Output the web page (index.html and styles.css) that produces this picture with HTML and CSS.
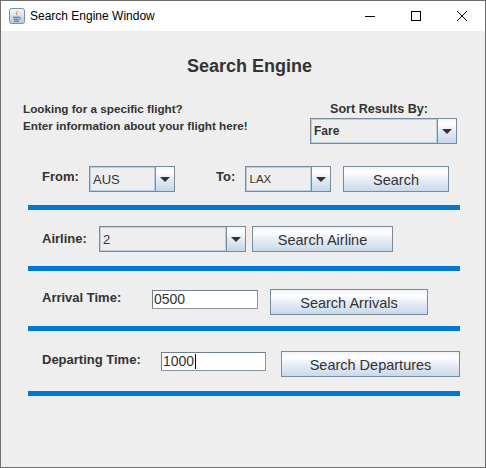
FILE: index.html
```html
<!DOCTYPE html>
<html>
<head>
<meta charset="utf-8">
<link rel="stylesheet" href="styles.css">
</head>
<body>
<div class="window">
  <div class="titlebar">
    <svg class="app-icon" width="16" height="16" viewBox="0 0 16 16">
      <defs>
        <linearGradient id="ig" x1="0" y1="0" x2="0" y2="1">
          <stop offset="0" stop-color="#f4f7fa"/>
          <stop offset="1" stop-color="#b9c9da"/>
        </linearGradient>
      </defs>
      <rect x="0.5" y="0.5" width="15" height="15" rx="2" fill="url(#ig)" stroke="#7d8fa3"/>
      <path d="M8.5 2.5c1.5 1.3-1.8 2.3-.3 4 .4.5.1 1.2-.4 1.5.8-.9-1.6-1.8-.6-3.3.6-.9 1.6-1.3 1.3-2.2z" fill="#e8741c"/>
      <path d="M4 9.2h6.5M4.5 11.2h5.5M5 13.2h5" stroke="#3f6d9c" stroke-width="1" fill="none"/>
      <path d="M10.5 9.5c1.6-.3 1.6 1.6 0 1.6" stroke="#3f6d9c" stroke-width="0.9" fill="none"/>
    </svg>
    <span class="title-text">Search Engine Window</span>
    <div class="controls">
      <div class="ctl">
        <svg width="10" height="10" viewBox="0 0 10 10"><path d="M0 5.5h10" stroke="#000" stroke-width="1"/></svg>
      </div>
      <div class="ctl">
        <svg width="10" height="10" viewBox="0 0 10 10"><rect x="0.5" y="0.5" width="9" height="9" fill="none" stroke="#000" stroke-width="1"/></svg>
      </div>
      <div class="ctl">
        <svg width="10" height="10" viewBox="0 0 10 10"><path d="M0 0L10 10M10 0L0 10" stroke="#000" stroke-width="1"/></svg>
      </div>
    </div>
  </div>

  <div class="content">
    <h1 class="heading">Search Engine</h1>

    <div class="info">
      <div class="intro">
        <div>Looking for a specific flight?</div>
        <div>Enter information about your flight here!</div>
      </div>
      <div class="sort">
        <div class="sort-label">Sort Results By:</div>
        <div class="combo combo-sort">
          <span class="combo-text text-bold">Fare</span>
          <span class="combo-btn"><i class="arrow"></i></span>
        </div>
      </div>
    </div>

    <div class="panel">
      <div class="row">
        <span class="label label-from">From:</span>
        <div class="combo combo-from">
          <span class="combo-text">AUS</span>
          <span class="combo-btn"><i class="arrow"></i></span>
        </div>
        <span class="label label-to">To:</span>
        <div class="combo combo-to">
          <span class="combo-text text-small">LAX</span>
          <span class="combo-btn"><i class="arrow"></i></span>
        </div>
        <button class="btn btn-search">Search</button>
      </div>
      <div class="rule rule-1"></div>

      <div class="row row-airline">
        <span class="label label-airline">Airline:</span>
        <div class="combo combo-airline">
          <span class="combo-text">2</span>
          <span class="combo-btn"><i class="arrow"></i></span>
        </div>
        <button class="btn btn-airline">Search Airline</button>
      </div>
      <div class="rule rule-2"></div>

      <div class="row row-arrival">
        <span class="label label-arrival">Arrival Time:</span>
        <div class="field field-arrival">0500</div>
        <button class="btn btn-arrival">Search Arrivals</button>
      </div>
      <div class="rule rule-3"></div>

      <div class="row row-depart">
        <span class="label label-depart">Departing Time:</span>
        <div class="field field-depart">1000<span class="caret"></span></div>
        <button class="btn btn-depart">Search Departures</button>
      </div>
      <div class="rule rule-4"></div>
    </div>
  </div>
</div>
</body>
</html>
```

FILE: styles.css
```css
* { box-sizing: border-box; }

html, body {
  margin: 0;
  padding: 0;
  background: #eeeeee;
}

body {
  font-family: "Liberation Sans", Arial, sans-serif;
}

.window {
  width: 486px;
  height: 468px;
  border: 1px solid #6f6f6f;
  background: #eeeeee;
  display: flex;
  flex-direction: column;
}

/* ---------- title bar ---------- */
.titlebar {
  height: 30px;
  background: #ffffff;
  display: flex;
  align-items: center;
  flex: none;
}

.app-icon {
  margin-left: 8px;
  flex: none;
}

.title-text {
  margin-left: 5px;
  font-size: 12px;
  color: #000;
  font-family: "Liberation Sans", Arial, sans-serif;
}

.controls {
  margin-left: auto;
  display: flex;
  align-self: stretch;
}

.ctl {
  width: 46px;
  display: flex;
  align-items: center;
  justify-content: center;
}

/* ---------- content ---------- */
.content {
  flex: 1;
  background: #eeeeee;
  color: #333333;
}

.heading {
  margin: 0;
  padding-top: 24px;
  padding-left: 13px;
  font-size: 18px;
  line-height: 22px;
  font-weight: bold;
  text-align: center;
  color: #333333;
}

.info {
  display: flex;
  align-items: flex-start;
  margin-top: 23px;
}

.intro {
  margin-left: 22px;
  font-size: 11.7px;
  font-weight: bold;
  line-height: 17px;
  color: #333333;
}

.sort {
  margin-left: auto;
  margin-right: 28px;
  margin-top: 1px;
  width: 147px;
}

.sort-label {
  padding-left: 20px;
  font-size: 12.6px;
  font-weight: bold;
  line-height: 17px;
  color: #333333;
  white-space: nowrap;
}

/* ---------- combo ---------- */
.combo {
  height: 26px;
  border: 1px solid #7a8a99;
  display: flex;
  background: #eeeeee;
  flex: none;
}

.combo-text {
  flex: 1;
  display: flex;
  align-items: center;
  padding-left: 2px;
  font-size: 13px;
  color: #333333;
  border: 1px solid #b8cfe5;
  background: #eeeeee;
}

.text-bold {
  font-weight: bold;
  font-size: 12px;
}

.text-small {
  font-size: 11.5px;
  padding-left: 2.5px;
}

.combo-btn {
  width: 19px;
  flex: none;
  border-left: 1px solid #7a8a99;
  background: linear-gradient(to bottom, #f2f6fa 0%, #ffffff 20%, #dde8f3 60%, #c5d6e8 100%);
  display: flex;
  align-items: center;
  justify-content: center;
}

.arrow {
  display: block;
  width: 0;
  height: 0;
  border-left: 5px solid transparent;
  border-right: 5px solid transparent;
  border-top: 5px solid #333333;
  margin-top: 1px;
}

.combo-sort { width: 147px; }
.combo-from { width: 86px; }
.combo-to { width: 86px; }
.combo-airline { width: 147px; }

/* ---------- panel ---------- */
.panel {
  margin-left: 27px;
  width: 432px;
  margin-top: 22px;
}

.row {
  display: flex;
  align-items: flex-start;
  height: 26px;
}

.label {
  font-size: 13px;
  font-weight: bold;
  line-height: 16px;
  color: #333333;
  flex: none;
  white-space: nowrap;
}

.label-from { margin-left: 14px; width: 47px; margin-top: 3px; }
.label-to { margin-left: 41px; width: 29px; margin-top: 3px; }
.label-airline { margin-left: 14px; width: 57px; margin-top: 5px; }
.label-arrival { margin-left: 14px; width: 110px; margin-top: 1px; }
.label-depart { margin-left: 14px; width: 119px; margin-top: 1px; }

.btn {
  height: 26px;
  border: 1px solid #7a8a99;
  background: linear-gradient(to bottom, #eef3f8 0%, #ffffff 22%, #e4ecf5 55%, #c9d9ea 100%);
  font-family: "Liberation Sans", Arial, sans-serif;
  font-size: 14.5px;
  color: #333333;
  padding: 0;
  padding-top: 1px;
  margin: 0;
  flex: none;
  text-align: center;
}

.btn-search { margin-left: 12px; width: 106px; }
.btn-airline { margin-left: 6px; width: 141px; }
.btn-arrival { margin-left: 12px; width: 158px; }
.btn-depart { margin-left: 15px; width: 179px; }

.field {
  height: 19px;
  margin-top: 1px;
  background: #ffffff;
  border: 1px solid #8a96a3;
  border-top-color: #6f7e8d;
  border-left-color: #6f7e8d;
  font-size: 14px;
  line-height: 17px;
  padding-left: 1px;
  color: #333333;
  flex: none;
  display: flex;
  align-items: center;
}

.field-arrival { width: 106px; }
.field-depart { width: 105px; }

.caret {
  display: inline-block;
  width: 1px;
  height: 15px;
  background: #000;
  margin-left: 1px;
}

.rule {
  height: 5px;
  background: #0078d7;
}

.rule-1 { margin-top: 13px; }
.row-airline { margin-top: 16px; }
.rule-2 { margin-top: 14px; }
.row-arrival { margin-top: 18px; }
.rule-3 { margin-top: 11px; }
.row-depart { margin-top: 20px; }
.rule-4 { margin-top: 14px; }
```
